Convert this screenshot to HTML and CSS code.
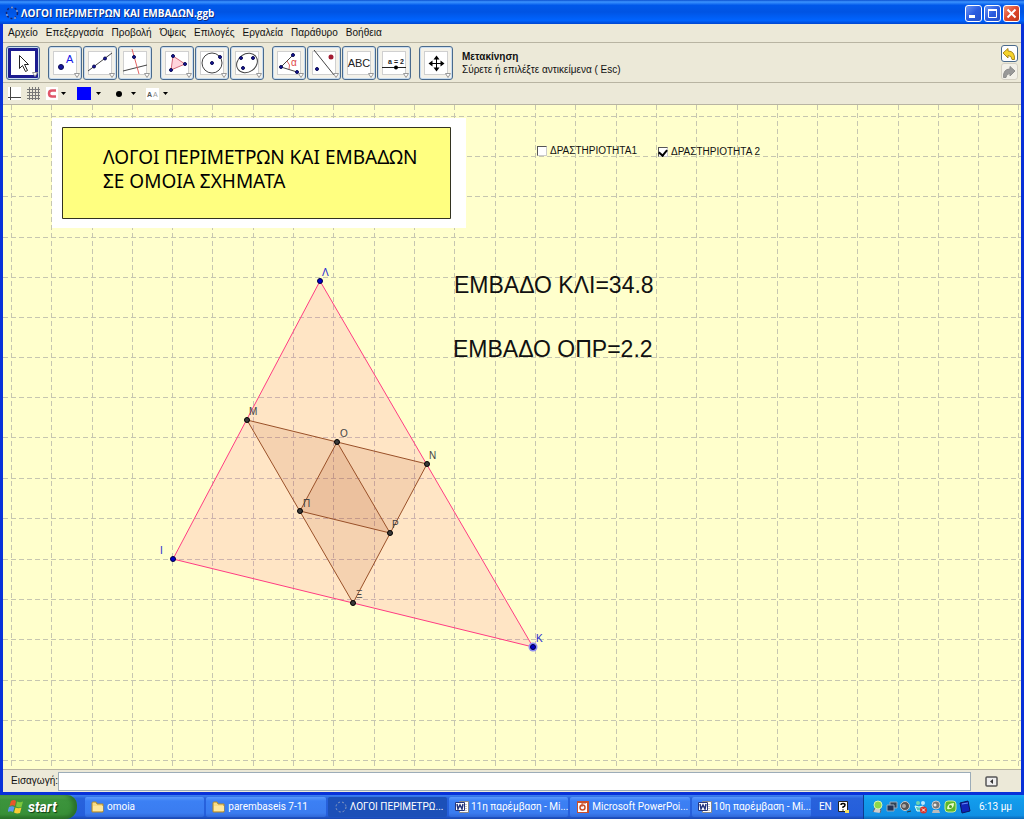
FILE: index.html
```html
<!DOCTYPE html>
<html lang="el">
<head>
<meta charset="utf-8">
<title>ΛΟΓΟΙ ΠΕΡΙΜΕΤΡΩΝ ΚΑΙ ΕΜΒΑΔΩΝ.ggb</title>
<link rel="stylesheet" href="styles.css">
</head>
<body>
<div class="window">
  <header class="titlebar">
    <svg class="app-icon" width="14" height="14" viewBox="0 0 14 14"><circle cx="7" cy="7" r="5.5" fill="none" stroke="#16246c" stroke-width="1.5" stroke-dasharray="2 2"/><g fill="#8a9cc8"><circle cx="7" cy="1.5" r="1"/><circle cx="12" cy="5" r="1"/><circle cx="10" cy="12" r="1"/><circle cx="2" cy="9" r="1"/></g></svg>
    <h1 class="title">ΛΟΓΟΙ ΠΕΡΙΜΕΤΡΩΝ ΚΑΙ ΕΜΒΑΔΩΝ.ggb</h1>
    <button class="caption" aria-label="Ελαχιστοποίηση"><svg width="15" height="15"><path d="M3 10.500h6" stroke="#fff" stroke-width="3"/></svg></button>
    <button class="caption" aria-label="Μεγιστοποίηση"><svg width="15" height="15"><path d="M3.500 4v7.500h8V4" fill="none" stroke="#fff"/><path d="M3 4h9" stroke="#fff" stroke-width="2"/></svg></button>
    <button class="caption caption-close" aria-label="Κλείσιμο"><svg width="15" height="15"><path d="M3.500 3.500l8 8m0-8l-8 8" stroke="#fff" stroke-width="2"/></svg></button>
  </header>

  <nav class="menu">
    <button>Αρχείο</button><button>Επεξεργασία</button><button>Προβολή</button><button>Όψεις</button><button>Επιλογές</button><button>Εργαλεία</button><button>Παράθυρο</button><button>Βοήθεια</button>
  </nav>

  <div class="toolbar">
    <div class="tools">
      <button class="tool tool-active" aria-label="Μετακίνηση"><svg viewBox="0 0 32 32"><path d="M12.500 8.500v13l3-3 3 6 2-1-3-6h4z" fill="#fff" stroke="#222"/><path class="more" d="M25.500 25.500h5l-2.500 4z"/></svg></button>
    </div>
    <div class="tools">
      <button class="tool" aria-label="Σημείο"><svg viewBox="0 0 32 32"><circle class="pt" cx="12" cy="20" r="2.500"/><text x="17" y="16" font-size="11" fill="#1414e6">A</text><path class="more" d="M25.500 26.500h5l-2.500 4z"/></svg></button>
      <button class="tool" aria-label="Ευθεία"><svg viewBox="0 0 32 32"><path class="ln" d="M4 24L28 6"/><circle class="pt" cx="10" cy="19.500" r="1.500"/><circle class="pt" cx="21" cy="11.500" r="1.500"/><path class="more" d="M25.500 26.500h5l-2.500 4z"/></svg></button>
      <button class="tool" aria-label="Κάθετη"><svg viewBox="0 0 32 32"><path class="ln" d="M4 24l24-6"/><path class="rd" d="M13 2l7 25"/><circle class="pt" cx="15" cy="10" r="1.500"/><path class="more" d="M25.500 26.500h5l-2.500 4z"/></svg></button>
    </div>
    <div class="tools">
      <button class="tool" aria-label="Πολύγωνο"><svg viewBox="0 0 32 32"><path d="M12 9l12 8-14 6z" fill="#ffd5dc" stroke="#d46b7b"/><circle class="pt" cx="12" cy="9" r="1.500"/><circle class="pt" cx="24" cy="17" r="1.500"/><circle class="pt" cx="10" cy="23" r="1.500"/><path class="more" d="M25.500 26.500h5l-2.500 4z"/></svg></button>
      <button class="tool" aria-label="Κύκλος"><svg viewBox="0 0 32 32"><circle class="ln" cx="16" cy="16" r="10"/><circle class="pt" cx="16" cy="16" r="1.500"/><circle class="pt" cx="24" cy="10" r="1.500"/><path class="more" d="M25.500 26.500h5l-2.500 4z"/></svg></button>
      <button class="tool" aria-label="Έλλειψη"><svg viewBox="0 0 32 32"><ellipse class="ln" cx="16" cy="16" rx="11" ry="9" transform="rotate(-35 16 16)"/><circle class="pt" cx="10" cy="11" r="1.500"/><circle class="pt" cx="22" cy="11" r="1.500"/><circle class="pt" cx="12" cy="21" r="1.500"/><path class="more" d="M25.500 26.500h5l-2.500 4z"/></svg></button>
    </div>
    <div class="tools">
      <button class="tool" aria-label="Γωνία"><svg viewBox="0 0 32 32"><path class="ln" d="M20 8L8 20l16 5"/><path class="rd" d="M14 14q4 4 2 8"/><text x="18" y="19" font-size="10" fill="#e04848">α</text><circle class="pt" cx="20" cy="8" r="1.500"/><circle class="pt" cx="8" cy="20" r="1.500"/><circle class="pt" cx="24" cy="25" r="1.500"/><path class="more" d="M25.500 26.500h5l-2.500 4z"/></svg></button>
      <button class="tool" aria-label="Συμμετρία"><svg viewBox="0 0 32 32"><path class="ln" d="M6 3l20 25"/><circle class="pt" cx="9" cy="22" r="1.500"/><circle cx="23" cy="10" r="2.500" fill="#a31c32"/><path class="more" d="M25.500 26.500h5l-2.500 4z"/></svg></button>
      <button class="tool" aria-label="Κείμενο"><svg viewBox="0 0 32 32"><text x="16" y="20" font-size="11" text-anchor="middle" fill="#222">ABC</text><path class="more" d="M25.500 26.500h5l-2.500 4z"/></svg></button>
      <button class="tool" aria-label="Δρομέας"><svg viewBox="0 0 32 32"><text x="18" y="17" font-size="7" font-weight="bold" text-anchor="middle" fill="#222">a = 2</text><path d="M4 20.500h24" stroke="#222"/><circle cx="18" cy="20.500" r="2" fill="#000"/><path class="more" d="M25.500 26.500h5l-2.500 4z"/></svg></button>
    </div>
    <div class="tools">
      <button class="tool" aria-label="Μετακίνηση σχεδίου"><svg viewBox="0 0 32 32"><path d="M16.500 11v11M11 16.500h11" stroke="#000"/><path d="M16.500 8.500l3 4h-6zM16.500 24.500l3-4h-6zM8.500 16.500l4-3v6zM24.500 16.500l-4-3v6z"/><path class="more" d="M25.500 26.500h5l-2.500 4z"/></svg></button>
    </div>
    <p class="help"><b>Μετακίνηση</b><span>Σύρετε ή επιλέξτε αντικείμενα ( Esc)</span></p>
    <div class="history">
      <button class="step" aria-label="Αναίρεση"><svg width="14" height="14"><path d="M1 6l5-4.500v2.500q7 0 6.500 8.500h-2.500q0-4-4-4v2.500z" fill="#f6d42c" stroke="#ac8a18"/></svg></button>
      <button class="step step-off" aria-label="Επανάληψη"><svg width="14" height="14"><path d="M13 6L8 1.500V4q-7 0-6.500 8.500h2.500q0-4 4-4V11z" fill="#999" stroke="#8c8c8c"/></svg></button>
    </div>
  </div>

  <div class="stylebar">
    <button aria-label="Άξονες"><svg width="14" height="14"><path fill="#fff" d="M0 0h13v13H0z"/><path d="M2.500 0v13M0 10.500h13" stroke="#444"/></svg></button>
    <button aria-label="Πλέγμα"><svg width="14" height="14"><path d="M2.500 0v13M5.500 0v13M8.500 0v13M11.500 0v13M0 2.500h13M0 5.500h13M0 8.500h13M0 11.500h13" stroke="#777"/></svg></button>
    <button aria-label="Έλξη"><svg width="22" height="14"><path fill="#fff" d="M0 0h12v13H0z"/><path d="M10 3.500H6q-3 0-3 3t3 3h4" fill="none" stroke="#e0566a" stroke-width="2.500"/><path d="M15 5h5l-2.500 3z"/></svg></button>
    <button class="swatch" aria-label="Χρώμα"><svg width="26" height="14"><path fill="#00f" d="M0 0h14v13H0z"/><path d="M19 5h5l-2.500 3z"/></svg></button>
    <button class="dot" aria-label="Μέγεθος σημείου"><svg width="24" height="14"><circle cx="5" cy="7" r="3"/><path d="M17 5h5l-2.500 3z"/></svg></button>
    <button aria-label="Ετικέτα"><svg width="24" height="14"><path fill="#fff" d="M0 1h13v12H0z"/><text x="1" y="10" font-size="7" font-weight="bold" fill="#555">A</text><text x="7" y="10" font-size="7" fill="#999">A</text><path d="M17 5h5l-2.500 3z"/></svg></button>
  </div>

  <main class="canvas">
    <svg class="drawing" role="img" aria-label="Τρίγωνο ΚΛΙ">
      <g transform="translate(-3 -105)">
        <path class="grid" d="M11.500 105V2000M51.500 105V2000M92.500 105V2000M132.500 105V2000M172.500 105V2000M212.500 105V2000M253.500 105V2000M293.500 105V2000M333.500 105V2000M374.500 105V2000M414.500 105V2000M454.500 105V2000M495.500 105V2000M535.500 105V2000M575.500 105V2000M616.500 105V2000M656.500 105V2000M696.500 105V2000M737.500 105V2000M777.500 105V2000M817.500 105V2000M857.500 105V2000M898.500 105V2000M938.500 105V2000M978.500 105V2000M1018.500 105V2000"/>
        <path class="grid" d="M3 116.500H3000M3 156.500H3000M3 196.500H3000M3 237.500H3000M3 277.500H3000M3 317.500H3000M3 357.500H3000M3 397.500H3000M3 437.500H3000M3 478.500H3000M3 518.500H3000M3 559.500H3000M3 599.500H3000M3 639.500H3000M3 680.500H3000M3 720.500H3000M3 760.500H3000"/>
        <path fill="#fff" d="M52 118h414v110H52z"/>
        <path fill="#ffff80" stroke="#333320" d="M62.500 127.500h388v91h-388z"/>
        <g class="heading"><text x="103" y="164">ΛΟΓΟΙ ΠΕΡΙΜΕΤΡΩΝ ΚΑΙ ΕΜΒΑΔΩΝ</text><text x="103" y="188">ΣΕ ΟΜΟΙΑ ΣΧΗΜΑΤΑ</text></g>
        <path class="tri-outer" d="M320 281L173 559 533 647z"/>
        <path class="tri-inner" d="M247 420L427 464 353 603z"/>
        <path class="tri-inner" d="M337 442L300 511 390 533z"/>
        <g fill="#3a3a3a" stroke="#000"><circle cx="247" cy="420" r="2.500"/><circle cx="337" cy="442" r="2.500"/><circle cx="427" cy="464" r="2.500"/><circle cx="300" cy="511" r="2.500"/><circle cx="390" cy="533" r="2.500"/><circle cx="353" cy="603" r="2.500"/></g>
        <circle cx="533" cy="647" r="4.500" fill="#8c8cf0"/>
        <g fill="#0000c8" stroke="#000040"><circle cx="320" cy="281" r="2.500"/><circle cx="173" cy="559" r="2.500"/><circle cx="533" cy="647" r="2.500"/></g>
        <g class="label"><text x="249" y="415">Μ</text><text x="340" y="437">Ο</text><text x="429" y="459">Ν</text><text x="303" y="507">Π</text><text x="392" y="528">Ρ</text><text x="356" y="598">Ξ</text></g>
        <g class="label label-free"><text x="322" y="276">Λ</text><text x="160" y="554">Ι</text><text x="536" y="642">Κ</text></g>
        <g class="area"><text x="454" y="293">ΕΜΒΑΔΟ ΚΛΙ=34.8</text><text x="453" y="357">ΕΜΒΑΔΟ ΟΠΡ=2.2</text></g>
      </g>
    </svg>
    <label class="check check-one"><input type="checkbox">ΔΡΑΣΤΗΡΙΟΤΗΤΑ1</label>
    <label class="check check-two"><input type="checkbox" checked>ΔΡΑΣΤΗΡΙΟΤΗΤΑ 2</label>
  </main>

  <form class="entry">
    <label for="cmd">Εισαγωγή:</label>
    <input id="cmd" type="text">
    <button type="button" aria-label="Βοήθεια εισαγωγής"><svg width="13" height="11"><rect x="1" y="1" width="11" height="9" rx="1" fill="#eee" stroke="#555" stroke-width="1.500"/><path d="M8 3v5L5 5.500z" fill="#333"/></svg></button>
  </form>
</div>

<footer class="taskbar">
  <button class="start"><svg width="16" height="16" viewBox="0 0 16 16"><path fill="#e8562a" d="M3 2q3-2 5 0L7 7Q5 5.500 1.500 7z"/><path fill="#7cc83c" d="M9 2.500q3 1.500 6 0L13.500 8q-3 1-5.500-.5z"/><path fill="#5a96f0" d="M1 8q3-1.500 5.500 0L5 13q-2-1.500-5.500 0z"/><path fill="#f8cc34" d="M7.500 8.500q3 1.500 6 0L12 14q-3 1-6-.5z"/></svg>start</button>
  <div class="tasks">
    <button class="task"><svg width="14" height="14"><path d="M1 3q0-1 1-1h3l1 2h6v8H1z" fill="#f8dc84" stroke="#b08828"/><path d="M2 6h10v5H2z" fill="#ffe89c"/></svg><span>omoia</span></button>
    <button class="task"><svg width="14" height="14"><path d="M1 3q0-1 1-1h3l1 2h6v8H1z" fill="#f8dc84" stroke="#b08828"/><path d="M2 6h10v5H2z" fill="#ffe89c"/></svg><span>parembaseis 7-11</span></button>
    <button class="task task-active"><svg width="14" height="14"><circle cx="7" cy="7" r="5" fill="none" stroke="#8c9cc0" stroke-dasharray="2 2"/></svg><span>ΛΟΓΟΙ ΠΕΡΙΜΕΤΡΩ...</span></button>
    <button class="task"><svg width="14" height="14"><path fill="#fff" stroke="#888" d="M4.500 1.500h9v11h-9z"/><path fill="#fff" stroke="#23347c" d="M.5 2.500h9v8h-9z"/><path d="M2 4l1 5 2-4 2 4 1-5" fill="none" stroke="#23347c" stroke-width="1.500"/><path d="M11 4v7" stroke="#888" stroke-dasharray="1 1"/></svg><span>11η παρέμβαση - Mi...</span></button>
    <button class="task"><svg width="14" height="14"><path fill="#c9502c" d="M1 1h12v12H1z"/><path fill="#fff" d="M2 3h9v9H2z"/><circle cx="6.500" cy="7.500" r="2.500" fill="none" stroke="#c9502c" stroke-width="1.500"/><path d="M6 7V3h4" fill="none" stroke="#c9502c"/></svg><span>Microsoft PowerPoi...</span></button>
    <button class="task"><svg width="14" height="14"><path fill="#fff" stroke="#888" d="M4.500 1.500h9v11h-9z"/><path fill="#fff" stroke="#23347c" d="M.5 2.500h9v8h-9z"/><path d="M2 4l1 5 2-4 2 4 1-5" fill="none" stroke="#23347c" stroke-width="1.500"/><path d="M11 4v7" stroke="#888" stroke-dasharray="1 1"/></svg><span>10η παρέμβαση - Mi...</span></button>
  </div>
  <div class="lang"><span>EN</span><svg width="11" height="12"><path fill="#fff" stroke="#222" d="M.5.500h9v10h-9z"/><path fill="#f4e060" d="M7 9h4v3H7z"/><path d="M3 4q0-1.500 2-1.500t2 1.500-2 2v1M5 8.500v1" fill="none" stroke="#000" stroke-width="1.500"/></svg></div>
  <div class="tray">
    <svg width="12" height="14"><path d="M1 12l2-4 3-1 3 3-1 3" fill="#ccc" stroke="#667"/><circle cx="6" cy="5" r="4" fill="#8cd84c" stroke="#d8f4b0"/></svg>
    <svg width="12" height="14"><path d="M4 2h7v6H4z" fill="#345" stroke="#9ab"/><path d="M1 5h7v6H1z" fill="#235" stroke="#9ab"/></svg>
    <svg width="12" height="14"><circle cx="5" cy="6" r="4.500" fill="#555" stroke="#ccc"/><circle cx="4" cy="6" r="2" fill="#aaa"/><path d="M7 12l4-1" stroke="#333"/></svg>
    <svg width="14" height="14"><circle cx="4" cy="3" r="2" fill="#6ed4b0"/><circle cx="9" cy="3" r="2" fill="#b8e8ff"/><path d="M1 6l4 1 4-1 1 5H3z" fill="#5cc8b8" stroke="#dff"/><circle cx="9.500" cy="10" r="3.500" fill="#d8342c"/><path d="M8 8.500l3 3m0-3l-3 3" stroke="#fff"/></svg>
    <svg width="12" height="14"><circle cx="6" cy="5" r="4" fill="#777" stroke="#ccc"/><circle cx="5" cy="5" r="1.500" fill="#eee"/><path d="M3 10h6l1 3H2z" fill="#bbb"/></svg>
    <svg width="13" height="14"><rect x="1" y="1" width="11" height="11" rx="3" fill="#5cb82c" stroke="#c8f090"/><path d="M3 9q0-6 7-6 0 7-7 6z" fill="#eafccc"/><circle cx="6.500" cy="6.500" r="1.500" fill="#4a9c20"/></svg>
    <svg width="12" height="14"><path d="M1 3l8-2 2 10-8 2z" fill="#1024b8" stroke="#0a1460"/><path d="M3 4l6-1" stroke="#6c8cf4"/></svg>
    <time>6:13 μμ</time>
  </div>
</footer>
</body>
</html>
```
FILE: styles.css
```css
* { box-sizing: border-box; }
html { height: 100%; }
body {
  margin: 0;
  min-height: 100%;
  display: flex;
  flex-direction: column;
  font: 10px/14px "Liberation Sans", Arial, sans-serif;
  color: #111;
}
button { font: inherit; color: inherit; border: 0; padding: 0; background: none; }
svg { display: block; flex: none; }

.window {
  flex: 1;
  display: flex;
  flex-direction: column;
  background: #ece9d8;
  border: solid #0831d9;
  border-width: 0 3px 3px;
}

/* Title bar */
.titlebar {
  height: 24px;
  margin: 0 -3px;
  padding: 2px 4px 0 5px;
  display: flex;
  align-items: center;
  gap: 2px;
  background: linear-gradient(#0a50d0, #3c94ff 8%, #0058ea 22%, #0054e3 50%, #0064ff 85%, #0046d0);
}
.title { flex: 1; margin: 0; font: bold 10px/16px "Open Sans", sans-serif; color: #fff; text-shadow: 1px 1px #0a2c80; }
.caption {
  width: 17px;
  height: 17px;
  border: 1px solid #fff;
  border-radius: 3px;
  background: linear-gradient(135deg, #6c96f4, #2a5ce0 50%, #2450c8);
}
.caption-close { background: linear-gradient(135deg, #f09478, #e0482c 50%, #c03818); }

/* Menu */
.menu { height: 19px; padding: 0 5px; display: flex; align-items: center; gap: 8px; border-bottom: 1px solid #b8b4a2; }

/* Toolbar */
.toolbar { height: 40px; padding: 0 3px; display: flex; align-items: center; gap: 8px; border-bottom: 1px solid #b8b4a2; }
.tools { display: flex; gap: 1px; }
.tool {
  width: 34px;
  height: 34px;
  border: 1px solid #4a6a8c;
  border-radius: 3px;
  background: #fff;
  box-shadow: inset 0 0 0 1px #c8dcf0, inset 0 0 0 4px #f4f2ea, inset 0 0 0 5px #d0d0d0;
}
.tool-active { box-shadow: inset 0 0 0 1px #c8dcf0, inset 0 0 0 4px #1c1c90; }
.tool text { font-family: "Liberation Sans", Arial, sans-serif; }
.pt { fill: #1616a0; stroke: #0a0a50; }
.ln { fill: none; stroke: #444; }
.rd { fill: none; stroke: #e46464; }
.more { fill: #fff; stroke: #999; }
.help { flex: 1; margin: 0 1px; display: flex; flex-direction: column; line-height: 13px; }
.history { display: flex; flex-direction: column; gap: 1px; }
.step { width: 17px; height: 17px; border: 1px solid #4a6a8c; border-radius: 3px; background: #fff; }
.step-off { border-color: #d4d0c4; background: #f2f0e8; }

/* Style bar */
.stylebar { height: 22px; padding: 0 5px; display: flex; align-items: center; gap: 5px; border-bottom: 1px solid #b8b4a2; }
.swatch { margin-left: 4px; }
.dot { margin: 0 3px 0 6px; }

/* Drawing area */
.canvas { flex: 1; position: relative; overflow: hidden; background: #ffffcc; }
.drawing { position: absolute; inset: 0; width: 100%; height: 100%; }
.grid { fill: none; stroke: #c6c6b0; stroke-dasharray: 5 3; shape-rendering: crispEdges; }
.heading { font: 19px "Noto Sans", sans-serif; fill: #000; }
.tri-outer { fill: #ff3399; fill-opacity: .13; stroke: #ff3c82; }
.tri-inner { fill: #993300; fill-opacity: .1; stroke: #995028; }
.label { font: 10px "Liberation Sans", Arial, sans-serif; fill: #444; }
.label-free { fill: #2828d0; }
.area { font: 23px "Liberation Sans", Arial, sans-serif; fill: #111; }
.check { position: absolute; display: flex; align-items: center; gap: 3px; }
.check-one { left: 534px; top: 39px; }
.check-two { left: 655px; top: 40px; }
.check input {
  appearance: none;
  width: 10px;
  height: 10px;
  margin: 0;
  display: grid;
  justify-items: center;
  background: #fff;
  border: 1px solid;
  border-color: #555 #ccc #ccc #555;
}
.check input:checked::before {
  content: "";
  width: 4px;
  height: 6px;
  border: solid #000;
  border-width: 0 2px 2px 0;
  transform: rotate(40deg);
}

/* Input bar */
.entry { height: 23px; padding: 1px 23px 1px 8px; display: flex; align-items: center; border-top: 1px solid #b8b4a2; }
.entry input { flex: 1; min-width: 0; height: 19px; margin-right: 14px; border: 1px solid #9cacb8; background: #fff; font: inherit; }

/* Taskbar */
.taskbar {
  height: 24px;
  display: flex;
  color: #fff;
  font: 10px/14px Roboto, sans-serif;
  background: linear-gradient(#3c80f0, #2862dc 15%, #245edb 85%, #1a48b0);
}
.start {
  width: 77px;
  padding: 0 0 0 8px;
  display: flex;
  align-items: center;
  gap: 4px;
  border-radius: 0 10px 12px 0;
  font: italic bold 14px/20px Roboto, sans-serif;
  text-shadow: 1px 1px 1px #123c12;
  background: linear-gradient(#5cac5c, #3c943c 20%, #389038 80%, #2a702a);
  box-shadow: inset -4px 0 4px #2a702a;
}
.tasks { flex: 1; min-width: 0; display: flex; gap: 2px; padding: 2px 2px 2px 8px; }
.task {
  flex: 1;
  min-width: 0;
  padding: 0 0 0 6px;
  display: flex;
  align-items: center;
  gap: 2px;
  border-radius: 2px;
  background: linear-gradient(#5a98fc, #3c80f4 20%, #3a7cf0 80%, #3068d8);
}
.task span { white-space: nowrap; }
.task-active { background: #1c50b8; }
.lang { width: 50px; padding-left: 6px; display: flex; align-items: center; gap: 6px; }
.tray {
  padding: 0 12px 0 8px;
  display: flex;
  align-items: center;
  gap: 2px;
  border-left: 1px solid #0c3c90;
  background: linear-gradient(#1ca8f4, #129cec 20%, #1090e4 85%, #0c68b8);
}
.tray time { margin-left: 6px; white-space: nowrap; }
```
